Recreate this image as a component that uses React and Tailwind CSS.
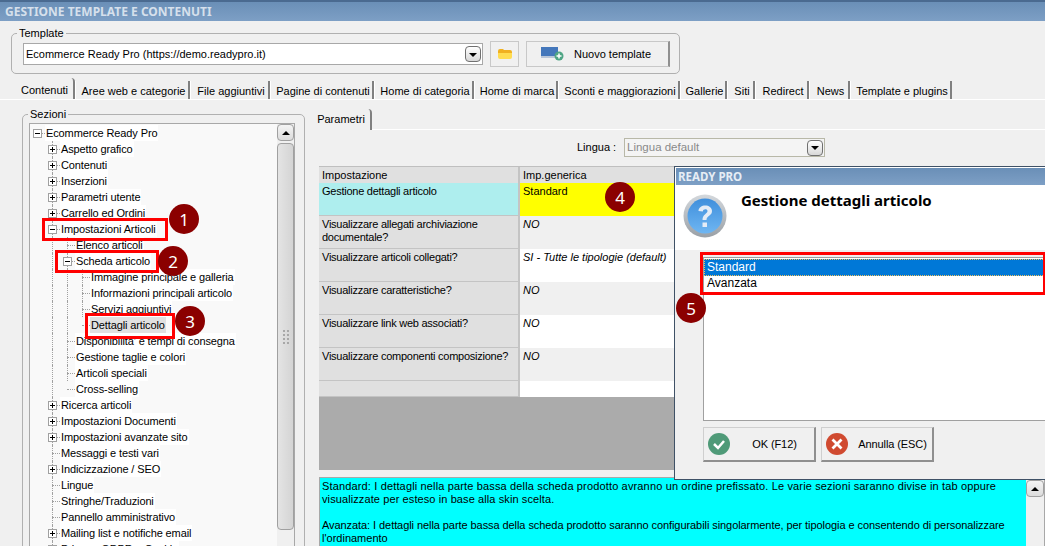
import React from "react";

const tabs = [
  { label: "Aree web e categorie", w: "w-[115px]" },
  { label: "File aggiuntivi", w: "w-[80px]" },
  { label: "Pagine di contenuti", w: "w-[104px]" },
  { label: "Home di categoria", w: "w-[100px]" },
  { label: "Home di marca", w: "w-[84px]" },
  { label: "Sconti e maggiorazioni", w: "w-[122px]" },
  { label: "Gallerie", w: "w-[47px]" },
  { label: "Siti", w: "w-[28px]" },
  { label: "Redirect", w: "w-[54px]" },
  { label: "News", w: "w-[41px]" },
  { label: "Template e plugins", w: "w-[102px]" },
];

// guides = which of the 4 indent columns carry a dotted vertical line
const tree = [
  { t: "Ecommerce Ready Pro", lvl: 0, exp: "-", guides: [] },
  { t: "Aspetto grafico", lvl: 1, exp: "+", guides: [1] },
  { t: "Contenuti", lvl: 1, exp: "+", guides: [1] },
  { t: "Inserzioni", lvl: 1, exp: "+", guides: [1] },
  { t: "Parametri utente", lvl: 1, exp: "+", guides: [1] },
  { t: "Carrello ed Ordini", lvl: 1, exp: "+", guides: [1] },
  { t: "Impostazioni Articoli", lvl: 1, exp: "-", guides: [1], box: "-left-[18px] -top-[3px] h-[23px] w-[126px]", badge: "1" },
  { t: "Elenco articoli", lvl: 2, guides: [1, 2] },
  { t: "Scheda articolo", lvl: 2, exp: "-", guides: [1, 2], box: "-left-[20px] -top-[3px] h-[23px] w-[104px]", badge: "2" },
  { t: "Immagine principale e galleria", lvl: 3, guides: [1, 2, 3] },
  { t: "Informazioni principali articolo", lvl: 3, guides: [1, 2, 3] },
  { t: "Servizi aggiuntivi", lvl: 3, guides: [1, 2, 3] },
  { t: "Dettagli articolo", lvl: 3, guides: [1, 2], selected: true, box: "-left-[5px] -top-[4px] h-[26px] w-[90px]", badge: "3" },
  { t: "Disponibilita' e tempi di consegna", lvl: 2, guides: [1, 2] },
  { t: "Gestione taglie e colori", lvl: 2, guides: [1, 2] },
  { t: "Articoli speciali", lvl: 2, guides: [1, 2] },
  { t: "Cross-selling", lvl: 2, guides: [1] },
  { t: "Ricerca articoli", lvl: 1, exp: "+", guides: [1] },
  { t: "Impostazioni Documenti", lvl: 1, exp: "+", guides: [1] },
  { t: "Impostazioni avanzate sito", lvl: 1, exp: "+", guides: [1] },
  { t: "Messaggi e testi vari", lvl: 1, guides: [1] },
  { t: "Indicizzazione / SEO", lvl: 1, exp: "+", guides: [1] },
  { t: "Lingue", lvl: 1, guides: [1] },
  { t: "Stringhe/Traduzioni", lvl: 1, guides: [1] },
  { t: "Pannello amministrativo", lvl: 1, guides: [1] },
  { t: "Mailing list e notifiche email", lvl: 1, exp: "+", guides: [1] },
  { t: "Privacy, GDPR e Cookie", lvl: 1, exp: "+", guides: [1] },
];

const rows = [
  { k: "Gestione dettagli articolo", v: "Standard", h: "h-[33px]", bg: "bg-[#ffff00]", kbg: "bg-[#aeeeee]" },
  { k: "Visualizzare allegati archiviazione documentale?", v: "NO", h: "h-[33px]", bg: "bg-[#f0f0f0]" },
  { k: "Visualizzare articoli collegati?", v: "SI - Tutte le tipologie (default)", h: "h-[33px]", bg: "bg-white" },
  { k: "Visualizzare caratteristiche?", v: "NO", h: "h-[33px]", bg: "bg-[#f0f0f0]" },
  { k: "Visualizzare link web associati?", v: "NO", h: "h-[33px]", bg: "bg-white" },
  { k: "Visualizzare componenti composizione?", v: "NO", h: "h-[33px]", bg: "bg-[#f0f0f0]" },
  { k: "", v: "", h: "h-[16px]", bg: "bg-white" },
];

function Badge({ n, className }) {
  return (
    <span className={"absolute z-30 flex h-[30px] w-[30px] items-center justify-center rounded-full bg-[#8b0000] font-['Noto_Sans',sans-serif] text-[17px] text-white " + className}>
      {n}
    </span>
  );
}

function Expander({ type }) {
  return (
    <span className="relative z-10 flex h-[9px] w-[9px] items-center justify-center border border-[#a0a0a0] bg-white">
      <span className="absolute h-px w-[5px] bg-black" />
      {type === "+" && <span className="absolute h-[5px] w-px bg-black" />}
    </span>
  );
}

function TreeRow({ item }) {
  const cols = [0, 1, 2, 3];
  return (
    <div className="flex h-4 items-center">
      {cols.slice(0, item.lvl + 1).map((c) => (
        <div key={c} className="relative flex h-4 w-[15px] shrink-0 items-center justify-center">
          {item.guides.includes(c) && (
            <span className="absolute bottom-0 left-[7px] top-0 border-l border-dotted border-[#a0a0a0]" />
          )}
          {c === item.lvl && <span className="absolute left-[7px] right-0 top-2 border-t border-dotted border-[#a0a0a0]" />}
          {c === item.lvl && item.exp && <Expander type={item.exp} />}
        </div>
      ))}
      <div className="relative">
        <span className={"block h-4 whitespace-nowrap px-px leading-4 tracking-[-0.12px] " + (item.selected ? "bg-[#e0e0e0]" : "bg-white")}>{item.t}</span>
        {item.box && <span className={"absolute z-20 border-[3px] border-[#ff0000] " + item.box} />}
        {item.badge === "1" && <Badge n="1" className="left-[109px] -top-[17px]" />}
        {item.badge === "2" && <Badge n="2" className="left-[83px] -top-[7px]" />}
        {item.badge === "3" && <Badge n="3" className="left-[85px] -top-[11px]" />}
      </div>
    </div>
  );
}

function ComboArrow() {
  return (
    <span className="flex h-4 w-4 items-center justify-center rounded-sm border border-[#707070] bg-gradient-to-b from-white to-[#d8d8d8]">
      <span className="mt-px h-0 w-0 border-x-[4px] border-t-[4px] border-x-transparent border-t-black" />
    </span>
  );
}

function ScrollUp() {
  return (
    <div className="flex h-[17px] items-center justify-center rounded-sm border border-[#a0a0a0] bg-gradient-to-b from-[#f4f4f4] to-[#dcdcdc]">
      <span className="h-0 w-0 border-x-[4px] border-b-[4px] border-x-transparent border-b-black" />
    </div>
  );
}

function FolderIcon() {
  return (
    <svg width="16" height="12" viewBox="0 0 16 12">
      <path d="M1 3 Q1 1 3 1 H6 L7 2 H13 Q15 2 15 4 V5 H1 Z" fill="#f0b020" />
      <path d="M1 5 H15 V9 Q15 11 13 11 H3 Q1 11 1 9 Z" fill="#ffdc50" />
    </svg>
  );
}

function NewIcon() {
  return (
    <svg width="24" height="14" viewBox="0 0 24 14">
      <rect x="0" y="0" width="17" height="9" fill="#4477bb" />
      <rect x="0" y="9" width="17" height="2" fill="#b9c6d8" />
      <circle cx="18" cy="9" r="4.5" fill="#4fa585" />
      <path d="M15.5 9 H20.5 M18 6.5 V11.5" stroke="#ffffff" strokeWidth="1.5" />
    </svg>
  );
}

function QuestionIcon() {
  return (
    <svg width="44" height="44" viewBox="0 0 44 44">
      <defs>
        <linearGradient id="qring" x1="0" y1="0" x2="0" y2="1">
          <stop offset="0" stopColor="#d4d8dc" />
          <stop offset="1" stopColor="#9aa0a6" />
        </linearGradient>
        <linearGradient id="qfill" x1="0" y1="0" x2="0" y2="1">
          <stop offset="0" stopColor="#3f8fdc" />
          <stop offset="1" stopColor="#6fb6f2" />
        </linearGradient>
      </defs>
      <circle cx="22" cy="22" r="21.5" fill="url(#qring)" />
      <circle cx="22" cy="22" r="17.5" fill="url(#qfill)" />
      <path d="M15.5 17 C15.5 9.5 29 9.5 29 17 C29 22 23.5 21.5 23.5 26 H19.5 C19.5 20 24.5 20 24.5 17 C24.5 14.5 20 14.5 19.8 17.5 Z" fill="#e4ecf6" />
      <rect x="19.5" y="28.5" width="4.5" height="4.5" fill="#e4ecf6" />
    </svg>
  );
}

function DialogButton({ icon, label, w }) {
  return (
    <button className={"flex h-[35px] items-center border border-[#cfcfcf] border-b-2 border-r-2 border-b-[#8f8f8f] border-r-[#8f8f8f] bg-[#f0f0f0] pl-[3px] " + w}>
      {icon}
      <span className="flex-1 pl-1 text-center tracking-[-0.1px]">{label}</span>
    </button>
  );
}

export default function App() {
  return (
    <div className="relative h-[546px] w-[1045px] overflow-hidden bg-[#f0f0f0] font-['Liberation_Sans',sans-serif] text-[11px] leading-[13px] text-black">
      {/* title bar */}
      <div className="flex h-[21px] items-center border-t-2 border-[#4a6a90] bg-gradient-to-b from-[#6a8fb7] to-[#7d9fc5] pl-[5px] font-['Noto_Sans',sans-serif] text-[12px] font-bold text-[#d6e0ec]">
        GESTIONE TEMPLATE E CONTENUTI
      </div>

      {/* template group */}
      <fieldset className="ml-[11px] mt-[6px] h-[47px] w-[669px] rounded-[5px] border border-[#b0b0b0] pl-[11px] pt-px">
        <legend className="-ml-[6px] px-[2px] leading-[13px]">Template</legend>
        <div className="flex items-center gap-[7px]">
          <div className="flex h-[22px] w-[460px] items-center justify-between border border-[#a8a8a8] bg-white pl-[2px] pr-[1px]">
            <span>Ecommerce Ready Pro (https://demo.readypro.it)</span>
            <ComboArrow />
          </div>
          <button className="flex h-[26px] w-[29px] items-center justify-center border border-[#c8c8c8]">
            <FolderIcon />
          </button>
          <button className="flex h-[26px] w-[144px] items-center border border-[#c8c8c8] border-r-2 border-r-[#909090] pl-[14px]">
            <NewIcon />
            <span className="ml-[9px]">Nuovo template</span>
          </button>
        </div>
      </fieldset>

      {/* main tabs */}
      <div className="mt-[6px] flex h-[20px] items-end border-b border-white pl-[12px]">
        <div className="flex h-[21px] w-[63px] items-center justify-center rounded-t-sm border-r-2 border-[#808080] bg-[#f0f0f0] pl-1 pt-[4px]">Contenuti</div>
        {tabs.map((tab) => (
          <div key={tab.label} className={"flex h-[18px] shrink-0 items-center justify-center border-l border-r-2 border-l-white border-r-[#808080] pl-[3px] pt-[3px] " + tab.w}>
            {tab.label}
          </div>
        ))}
      </div>

      <div className="flex pl-[22px] pt-[8px]">
        {/* left tree */}
        <fieldset className="h-[460px] w-[283px] shrink-0 rounded-[5px] border border-[#b0b0b0] pl-[6px] pr-[9px]">
          <legend className="-ml-px px-[2px] leading-[13px]">Sezioni</legend>
          <div className="mt-[2px] flex h-[440px] overflow-hidden border border-[#a8a8a8] bg-[#f9f9f9]">
            <div className="flex-1 pt-px">
              {tree.map((item) => (
                <TreeRow key={item.t} item={item} />
              ))}
            </div>
            <div className="flex w-[17px] shrink-0 flex-col bg-[#f0f0f0]">
              <ScrollUp />
              <div className="mt-[2px] flex h-[387px] items-center justify-center rounded-sm border border-[#a0a0a0] bg-gradient-to-r from-[#e4e4e4] to-[#d4d4d4]">
                <span className="grid grid-cols-2 gap-[2px]">
                  {[0, 1, 2, 3, 4, 5, 6, 7].map((i) => (
                    <span key={i} className="h-[2px] w-[2px] bg-[#a8a8a8]" />
                  ))}
                </span>
              </div>
            </div>
          </div>
        </fieldset>

        {/* right panel */}
        <div className="ml-[7px] flex-1">
          <div className="mt-px flex h-[21px] border-b border-white">
            <div className="flex h-[21px] w-[60px] items-center justify-center rounded-t-sm border-r-2 border-[#808080] bg-[#f0f0f0]">Parametri</div>
          </div>
          <div className="mt-[8px] flex h-[19px] items-center pl-[265px]">
            <span className="w-[47px]">Lingua :</span>
            <div className="flex h-[19px] w-[201px] items-center justify-between border border-[#b8b8a8] bg-[#f4f4f4] pl-[2px] pr-px text-[11.5px] text-[#8a8a8a]">
              Lingua default
              <ComboArrow />
            </div>
          </div>

          {/* grid */}
          <div className="ml-[7px] mt-[9px] flex h-[304px] flex-col bg-[#ababab]">
            <div className="flex h-[17px] shrink-0 border-t border-[#bfbfbf] bg-[#e0e0e0]">
              <div className="w-[201px] border-r-2 border-[#c4c4c4] pl-[3px] pt-[2px]">Impostazione</div>
              <div className="flex-1 pl-[3px] pt-[2px]">Imp.generica</div>
            </div>
            {rows.map((row, i) => (
              <div key={i} className={"flex shrink-0 " + row.h}>
                <div className={"w-[201px] border-b border-r-2 border-[#c4c4c4] pl-[3px] pt-[2px] tracking-[-0.25px] " + (row.kbg || "bg-[#e0e0e0]")}>{row.k}</div>
                <div className={"relative flex-1 pl-[3px] pt-[2px] " + row.bg + (row.v === "Standard" ? "" : " italic")}>
                  {row.v}
                  {row.v === "Standard" && <Badge n="4" className="left-[85px] top-[-1px]" />}
                </div>
              </div>
            ))}
          </div>

          {/* help text */}
          <div className="ml-[7px] mt-[7px] flex h-[80px] border border-[#a8a8a8] bg-[#00ffff] pl-[2px] pt-[2px]">
            <div className="flex-1 whitespace-nowrap">
              <span className="tracking-[0.15px]">
                Standard: I dettagli nella parte bassa della scheda prodotto avranno un ordine prefissato. Le varie sezioni saranno divise in tab oppure
              </span>
              <br />
              <span className="tracking-[0.1px]">visualizzate per esteso in base alla skin scelta.</span>
              <br />
              <br />
              <span className="tracking-[-0.07px]">
                Avanzata: I dettagli nella parte bassa della scheda prodotto saranno configurabili singolarmente, per tipologia e consentendo di personalizzare
              </span>
              <br />
              l'ordinamento
            </div>
            <div className="w-[18px] shrink-0 bg-[#f0f0f0]">
              <ScrollUp />
            </div>
          </div>
        </div>
      </div>

      {/* dialog */}
      <div className="absolute left-[674px] top-[166px] z-40 w-[375px] border border-[#3f5166] bg-[#f0f0f0]">
        <div className="flex h-[19px] items-center border border-white bg-gradient-to-b from-[#6a8fb7] to-[#7d9fc5] pl-[2px] font-['Noto_Sans',sans-serif] text-[11.5px] font-bold text-[#e6edf5]">
          READY PRO
        </div>
        <div className="flex h-[64px] bg-white pl-[8px] pt-[8px]">
          <QuestionIcon />
          <span className="ml-[14px] mt-[-4px] font-['Noto_Sans',sans-serif] text-[15px] font-bold leading-5">Gestione dettagli articolo</span>
        </div>
        <div className="relative ml-[28px] mt-[7px] h-[164px] border border-[#a0a0a0] bg-white pt-px text-[12px]">
          <div className="flex h-[17px] items-center border border-dotted border-[#f0c060] bg-[#0078d7] pl-[2px] text-white">Standard</div>
          <div className="flex h-[15px] items-center pl-[3px]">Avanzata</div>
          <span className="absolute -left-[4px] -top-[6px] h-[43px] w-[346px] border-[3px] border-[#ff0000]" />
          <Badge n="5" className="-left-[28px] top-[35px]" />
        </div>
        <div className="ml-[28px] mt-[6px] flex h-[52px] gap-[5px]">
          <DialogButton
            w="w-[113px]"
            label="OK (F12)"
            icon={
              <svg width="24" height="24" viewBox="0 0 24 24">
                <circle cx="12" cy="12" r="11" fill="#4f9a78" />
                <path d="M7 12 L11 16 L17 9" fill="none" stroke="#ffffff" strokeWidth="2.5" />
              </svg>
            }
          />
          <DialogButton
            w="w-[113px]"
            label="Annulla (ESC)"
            icon={
              <svg width="24" height="24" viewBox="0 0 24 24">
                <circle cx="12" cy="12" r="11" fill="#d04a30" />
                <path d="M7.5 7.5 L16.5 16.5 M16.5 7.5 L7.5 16.5" stroke="#ffffff" strokeWidth="2.8" />
              </svg>
            }
          />
        </div>
      </div>
    </div>
  );
}
